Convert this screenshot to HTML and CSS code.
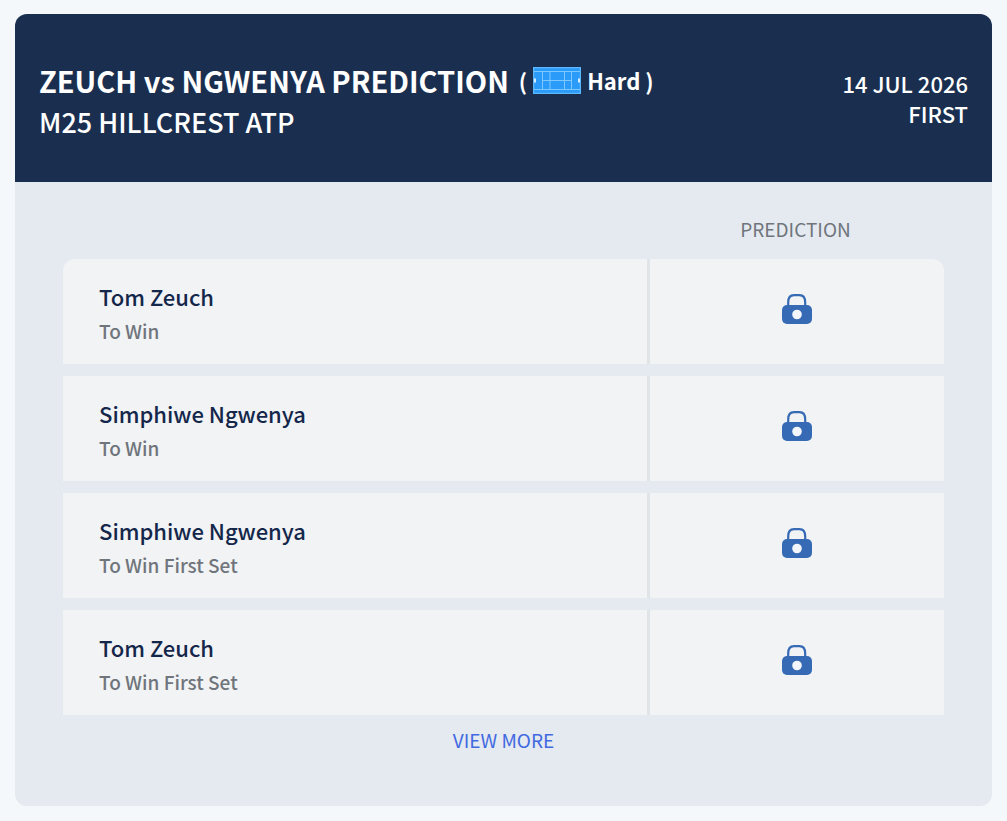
FILE: index.html
```
<!DOCTYPE html>
<html lang="en">
<head>
  <meta charset="UTF-8">
  <meta name="viewport" content="width=device-width, initial-scale=1">
  <title>Zeuch vs Ngwenya Prediction</title>
  <link rel="stylesheet" href="styles.css">
</head>
<body>
  <!-- shared lock icon -->
  <svg class="sprite" aria-hidden="true">
    <symbol id="lock" viewBox="0 0 30 30">
      <path d="M6.200 13V8.500C6.200 3.500 8.500 1.200 12 1.200h5.500c3.500 0 5.700 2.300 5.700 7.300V13" fill="none" stroke="#376ab5" stroke-width="2.200"/>
      <rect y="11" width="30" height="19" rx="5" fill="#376ab5"/>
      <circle cx="15" cy="20.500" r="4.800" fill="#f3f6fa"/>
    </symbol>
  </svg>

  <main class="card">
    <header class="card-header">
      <div class="match">
        <h1>ZEUCH vs NGWENYA PREDICTION
          <span class="surface">(
            <svg class="court" viewBox="0 0 48 27" aria-hidden="true">
              <rect width="48" height="27" fill="#2b9bfa"/>
              <g fill="none" stroke="#7cc8ff">
                <path d="M.5.500h47v26H.500z" stroke="#5bb8ff" stroke-width="1.500"/>
                <path d="M1 4.500h46M1 22.500h46M9.500 4.500v18M17 4.500v18M31.500 4.500v18M38.500 4.500v18M9.500 13.500h29"/>
              </g>
              <path d="M1 11.500h2v4H1zM45 11.500h2v4h-2z" fill="#d5edff"/>
            </svg>
            Hard )</span>
        </h1>
        <p class="tournament">M25 HILLCREST ATP</p>
      </div>
      <div class="match-date">
        <div>14 JUL 2026</div>
        <div>FIRST</div>
      </div>
    </header>

    <div class="card-body">
      <table class="predictions">
        <thead>
          <tr>
            <td></td>
            <th scope="col">PREDICTION</th>
          </tr>
        </thead>
        <tbody>
          <tr>
            <td>
              <div class="player">Tom Zeuch</div>
              <div class="market">To Win</div>
            </td>
            <td class="pick"><svg class="lock" role="img" aria-label="Locked"><use href="#lock"/></svg></td>
          </tr>
          <tr>
            <td>
              <div class="player">Simphiwe Ngwenya</div>
              <div class="market">To Win</div>
            </td>
            <td class="pick"><svg class="lock" role="img" aria-label="Locked"><use href="#lock"/></svg></td>
          </tr>
          <tr>
            <td>
              <div class="player">Simphiwe Ngwenya</div>
              <div class="market">To Win First Set</div>
            </td>
            <td class="pick"><svg class="lock" role="img" aria-label="Locked"><use href="#lock"/></svg></td>
          </tr>
          <tr>
            <td>
              <div class="player">Tom Zeuch</div>
              <div class="market">To Win First Set</div>
            </td>
            <td class="pick"><svg class="lock" role="img" aria-label="Locked"><use href="#lock"/></svg></td>
          </tr>
        </tbody>
      </table>
      <a class="view-more" href="#">VIEW MORE</a>
    </div>
  </main>
</body>
</html>
```
FILE: styles.css
```
* {
  box-sizing: border-box;
}

body {
  margin: 14px 15px;
  font-family: "Noto Sans CJK SC", "Noto Sans", sans-serif;
  background: #f5f8fa;
  color: #14274a;
}

.sprite {
  display: none;
}

.card {
  background: #e5eaf0;
  border-radius: 12px;
  overflow: hidden;
}

/* Header */
.card-header {
  display: flex;
  justify-content: space-between;
  align-items: center;
  gap: 24px;
  padding: 38px 24px;
  background: #1a2f50;
  color: #fff;
}

.match {
  padding-top: 8px;
}

h1 {
  display: flex;
  align-items: center;
  gap: 10px;
  margin: 0;
  font-size: 29px;
  line-height: 40px;
  font-weight: 700;
}

.surface {
  display: flex;
  align-items: center;
  gap: 6px;
  font-size: 22px;
  white-space: nowrap;
}

.court {
  width: 48px;
  height: 27px;
}

.tournament {
  margin: 0;
  font-size: 27px;
  line-height: 44px;
  font-weight: 500;
}

.match-date {
  font-size: 22px;
  line-height: 30px;
  font-weight: 500;
  text-align: right;
}

/* Predictions table */
.card-body {
  padding: 17px 48px 53px;
}

.predictions {
  width: 100%;
  table-layout: fixed;
  border-collapse: separate;
  border-spacing: 0 12px;
}

.predictions td,
.predictions th {
  padding: 0;
}

.predictions th {
  width: 297px;
  font-size: 19px;
  line-height: 36px;
  font-weight: 400;
  color: #70757c;
}

.predictions tbody td {
  padding: 18px 36px 17px;
  background: #f1f3f5;
}

.predictions tbody .pick {
  padding: 0 0 6px;
  border-left: 3px solid #dfe4e8;
  text-align: center;
}

.predictions tbody tr:first-child td:first-child {
  border-top-left-radius: 12px;
}

.predictions tbody tr:first-child td:last-child {
  border-top-right-radius: 12px;
}

.player {
  font-size: 22px;
  line-height: 38px;
  font-weight: 500;
}

.market {
  font-size: 19px;
  line-height: 32px;
  font-weight: 500;
  color: #70757c;
}

.lock {
  display: block;
  width: 30px;
  height: 30px;
  margin: 0 auto;
}

.view-more {
  display: block;
  font-size: 19px;
  line-height: 26px;
  text-align: center;
  text-decoration: none;
  color: #4169e1;
}
```
